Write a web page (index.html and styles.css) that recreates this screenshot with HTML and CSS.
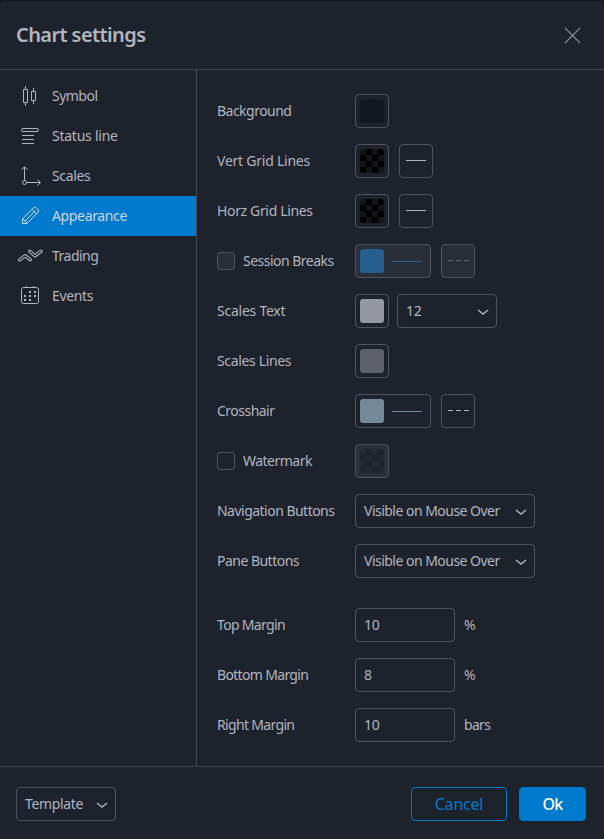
FILE: index.html
```html
<!DOCTYPE html>
<html lang="en">
<head>
<meta charset="utf-8">
<title>Chart settings</title>
<link rel="stylesheet" href="styles.css">
</head>
<body>
<div class="dialog">
  <header class="header">
    <h1>Chart settings</h1>
    <svg class="close" width="17" height="17" viewBox="0 0 17 17"><path d="M1 1l15 15M16 1L1 16"/></svg>
  </header>
  <main class="main">
    <nav class="tabs">
      <a class="tab"><svg class="icon" viewBox="0 0 28 28"><path d="M7.5 7.5h4v13h-4zM9.5 4v3M9.5 21v3M15.500 9.500h4v9h-4zM17.500 6v3M17.500 19v3"/></svg><span class="tight">Symbol</span></a>
      <a class="tab"><svg class="icon" viewBox="0 0 28 28"><rect x="5.500" y="6.500" width="17" height="3" rx="1.500"/><path d="M6 13.500h12M6 17.500h12M6 21.500h12"/></svg><span class="loose">Status line</span></a>
      <a class="tab"><svg class="icon" viewBox="0 0 28 28"><path d="M8.500 18.500V4.800M5.500 7.800l3-3 3 3M10.500 20.500H24.500M21.500 17.500l3 3-3 3"/><circle cx="8.500" cy="20.500" r="2"/></svg><span>Scales</span></a>
      <a class="tab active"><svg class="icon" viewBox="0 0 28 28"><path d="M6.500 21.500v-4.700L17.800 5.500q1-1 2 0l2.500 2.500q1 1 0 2L11 21.500zM7 17l4 4M9 19L19.300 8.700M16 7.300l4.600 4.600"/></svg><span>Appearance</span></a>
      <a class="tab"><svg class="icon" viewBox="0 0 28 28"><path class="outer" d="M3.700 18l5.300-4.300 5.300 4.100M13.700 9.300l5.200 4.500 6-4.500"/><path class="inner" d="M3.700 18l5.300-4.300 5.300 4.100M13.700 9.300l5.200 4.500 6-4.500"/></svg><span class="tight">Trading</span></a>
      <a class="tab"><svg class="icon" viewBox="0 0 28 28"><rect x="5.500" y="5.500" width="17" height="16" rx="2"/><path d="M10.500 4v1M17.500 4v1"/><path class="dots" d="M13 9h2v2h-2zM18 9h2v2h-2zM8 13h2v2H8zM13 13h2v2h-2zM18 13h2v2h-2zM8 17h2v2H8zM13 17h2v2h-2z"/></svg><span>Events</span></a>
    </nav>
    <section class="content">
      <div class="row"><div class="label tight">Background</div><div class="box"><i class="swatch navy"></i></div></div>
      <div class="row"><div class="label loose">Vert Grid Lines</div><div class="box"><i class="swatch checker"></i></div><div class="box style"><i class="solid"></i></div></div>
      <div class="row"><div class="label">Horz Grid Lines</div><div class="box"><i class="swatch checker"></i></div><div class="box style"><i class="solid"></i></div></div>
      <div class="row"><div class="label tight"><i class="check off"></i>Session Breaks</div><div class="box long disabled"><i class="swatch blue"></i><i class="line blue"></i></div><div class="box style disabled"><i class="dashes"></i></div></div>
      <div class="row"><div class="label loose">Scales Text</div><div class="box"><i class="swatch silver"></i></div><div class="select size"><span>12</span><svg class="chevron" viewBox="0 0 12 6"><path d="M1 1l5 4 5-4"/></svg></div></div>
      <div class="row"><div class="label">Scales Lines</div><div class="box"><i class="swatch gray"></i></div></div>
      <div class="row"><div class="label tight">Crosshair</div><div class="box long"><i class="swatch steel"></i><i class="line steel"></i></div><div class="box style"><i class="dashes"></i></div></div>
      <div class="row"><div class="label tight"><i class="check"></i>Watermark</div><div class="box disabled"><i class="swatch checker faint"></i></div></div>
      <div class="row"><div class="label tight">Navigation Buttons</div><div class="select visibility tight"><span>Visible on Mouse Over</span><svg class="chevron" viewBox="0 0 12 6"><path d="M1 1l5 4 5-4"/></svg></div></div>
      <div class="row"><div class="label tight">Pane Buttons</div><div class="select visibility tight"><span>Visible on Mouse Over</span><svg class="chevron" viewBox="0 0 12 6"><path d="M1 1l5 4 5-4"/></svg></div></div>
      <div class="row margins"><div class="label tighter">Top Margin</div><div class="select field">10</div><span class="unit">%</span></div>
      <div class="row"><div class="label tighter">Bottom Margin</div><div class="select field">8</div><span class="unit">%</span></div>
      <div class="row"><div class="label tighter">Right Margin</div><div class="select field">10</div><span class="unit tighter">bars</span></div>
    </section>
  </main>
  <footer class="footer">
    <div class="select template"><span>Template</span><svg class="chevron" viewBox="0 0 12 6"><path d="M1 1l5 4 5-4"/></svg></div>
    <div class="button cancel">Cancel</div>
    <div class="button ok">Ok</div>
  </footer>
</div>
</body>
</html>
```
FILE: styles.css
```css
* { box-sizing: border-box; }
body {
  margin: 0;
  padding-top: 1px;
  background: #131722;
  color: #b2b5be;
  font: 14px/20px "Trebuchet MS", "Noto Sans", sans-serif;
  letter-spacing: -0.35px;
  white-space: nowrap;
}
.loose { letter-spacing: -0.24px; }
.tight { letter-spacing: -0.52px; }
.tighter { letter-spacing: -0.67px; }
.dialog { height: 838px; display: flex; flex-direction: column; background: #1e222d; border-radius: 4px 4px 0 0; }
.header { height: 69px; flex: none; display: flex; align-items: center; justify-content: space-between; padding: 0 23px 0 16px; border-bottom: 1px solid #434651; }
h1 { margin: 0; font-size: 20px; line-height: 28px; font-weight: 600; letter-spacing: -0.6px; }
.close { stroke: #868993; fill: none; stroke-width: 1.2; }
.main { height: 696px; flex: none; display: flex; }
.tabs { width: 197px; flex: none; padding-top: 6px; border-right: 1px solid #434651; }
.tab { height: 40px; display: flex; align-items: center; padding-left: 16px; gap: 8px; }
.tab.active { background: #007acc; color: #d1d4dc; }
.icon { width: 28px; height: 28px; fill: none; stroke: currentColor; stroke-width: 1; overflow: visible; }
.icon .outer { stroke-width: 3.4; stroke-linecap: round; stroke-linejoin: round; }
.icon .inner { stroke: #1e222d; stroke-width: 1.2; stroke-linecap: round; }
.icon .dots { fill: currentColor; stroke: none; }
.content { flex: 1; padding: 16px 20px 0; }
.row { height: 50px; display: flex; align-items: center; }
.row.margins { margin-top: 14px; }
.label { width: 138px; flex: none; display: flex; align-items: center; }
.check { width: 18px; height: 18px; margin-right: 8px; border: 1px solid #50535e; border-radius: 3px; }
.check.off { background: #2a2e39; }
.box { width: 34px; height: 34px; flex: none; display: flex; align-items: center; padding: 0 4px; border: 1px solid #50535e; border-radius: 4px; }
.box.long { width: 76px; gap: 8px; }
.box.style { margin-left: 10px; justify-content: center; padding: 0; }
.box.disabled { background: #2a2e39; }
.swatch { width: 24px; height: 24px; flex: none; border-radius: 3px; }
.line { width: 30px; height: 1px; }
.navy { background: #131722; }
.blue { background: #265e8f; }
.silver { background: #9598a1; }
.gray { background: #5d606b; }
.steel { background: #758a99; }
.checker { background: repeating-conic-gradient(#000 0 25%, #111517 0 50%) 0 0 / 12px 12px; }
.faint { background-image: repeating-conic-gradient(#1e222a 0 25%, #24282f 0 50%); }
.solid { width: 20px; height: 1px; margin-top: -1px; background: #b2b5be; }
.dashes { width: 21px; height: 1px; margin-top: -1px; background: repeating-linear-gradient(90deg, #b2b5be 0 5px, transparent 5px 8px); }
.disabled .dashes { background: repeating-linear-gradient(90deg, #5d606b 0 5px, transparent 5px 8px); }
.select { height: 34px; display: flex; align-items: center; justify-content: space-between; padding: 0 7px 0 8px; border: 1px solid #50535e; border-radius: 4px; }
.size { width: 100px; margin-left: 8px; }
.visibility { width: 180px; }
.field { width: 100px; }
.unit { margin-left: 9px; }
.chevron { width: 12px; height: 6px; margin-top: 1px; fill: none; stroke: #b2b5be; stroke-width: 1.400; }
.footer { flex: 1; display: flex; align-items: center; padding: 2px 18px 0 16px; border-top: 1px solid #434651; }
.template { width: 100px; }
.button { height: 34px; display: flex; align-items: center; justify-content: center; border: 1px solid #007acc; border-radius: 4px; font-size: 16px; letter-spacing: -0.2px; }
.cancel { width: 96px; margin-left: auto; color: #007acc; }
.ok { width: 67px; margin-left: 12px; background: #007acc; color: #fff; font-weight: 500; letter-spacing: -0.8px; }
```
